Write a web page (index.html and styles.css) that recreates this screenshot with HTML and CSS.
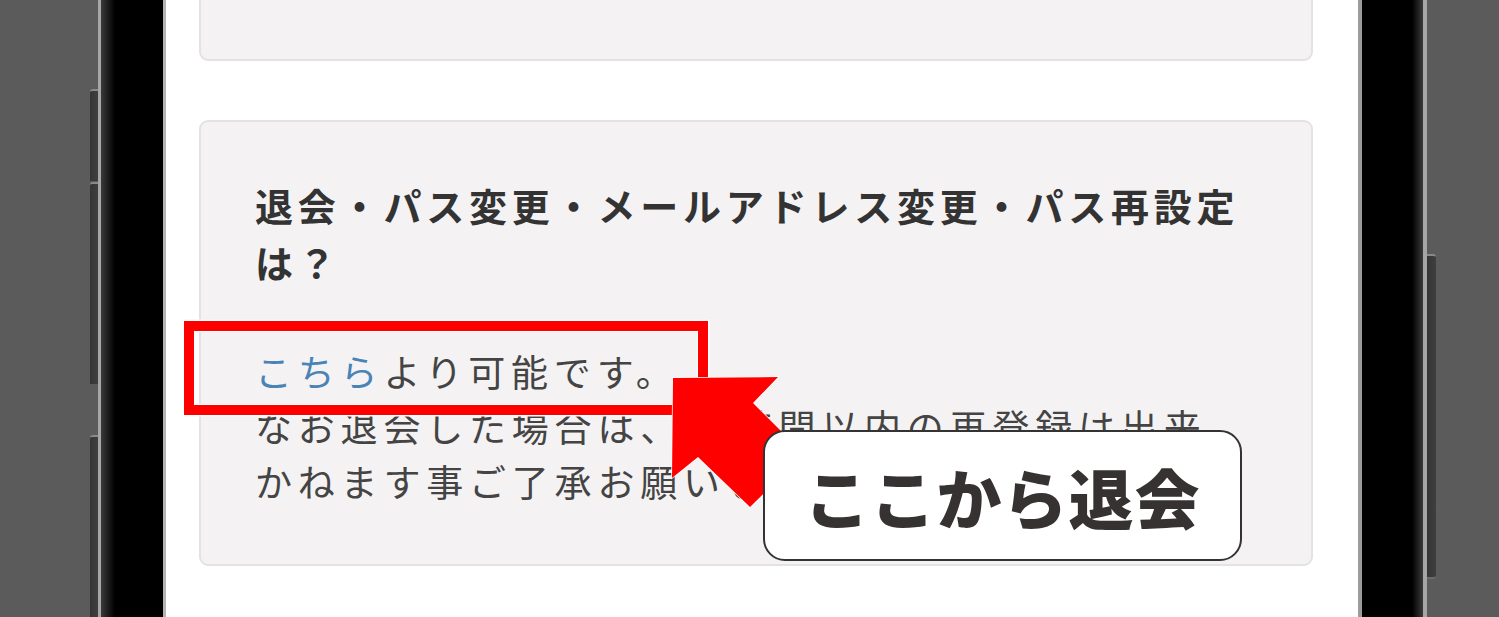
FILE: index.html
```html
<!DOCTYPE html>
<html lang="ja">
<head>
  <meta charset="UTF-8">
  <title>退会・パス変更</title>
  <link rel="stylesheet" href="styles.css">
</head>
<body>

  <div class="stage">
    <div class="buttons-left">
      <span class="side-btn btn-1"></span>
      <span class="side-btn btn-2"></span>
      <span class="side-btn btn-3"></span>
    </div>

    <div class="phone">
      <div class="screen">
        <div class="card card-prev"></div>

        <div class="card card-faq">
          <h3 class="faq-title">退会・パス変更・メールアドレス変更・パス再設定は？</h3>
          <p class="faq-body"><a href="#" class="faq-link">こちら</a>より可能です。<br>なお退会した場合は、24時間以内の再登録は出来かねます事ご了承お願いします。</p>
        </div>
      </div>
    </div>

    <div class="buttons-right">
      <span class="side-btn btn-4"></span>
    </div>

    <!-- annotation layer -->
    <div class="mark-box"></div>
    <svg class="mark-arrow" width="1499" height="617" viewBox="0 0 1499 617">
      <polygon points="673,378 778,377 753,403 804,454 750,507 698,457 672,478" />
    </svg>
    <div class="callout">ここから退会</div>
  </div>

</body>
</html>
```

FILE: styles.css
```css
body {
  margin: 0;
  background-color: #5b5b5b;
  font-family: "Noto Sans CJK JP", "Noto Sans", sans-serif;
  overflow: hidden;
}

.stage {
  position: relative;
  display: flex;
  height: 617px;
  padding-left: 90px;
}

/* side buttons of the phone */
.buttons-left,
.buttons-right {
  display: flex;
  flex-direction: column;
  width: 8px;
}

.buttons-right {
  width: 9px;
}

.side-btn {
  display: block;
  background: linear-gradient(to right, #353535, #3f3f3f);
  border-top: 2px solid #8a8a8a;
  border-radius: 3px 0 0 0;
}

.buttons-right .side-btn {
  border-radius: 0 3px 3px 0;
  border-bottom: 2px solid #6a6a6a;
}

.btn-1 { margin-top: 89px; height: 90px; }
.btn-2 { margin-top: 1px; height: 200px; }
.btn-3 { margin-top: 51px; flex: 1; }
.btn-4 { margin-top: 254px; height: 321px; }

/* phone body */
.phone {
  display: flex;
  width: 1329px;
  padding: 0 61px 0 62px;
  border-left: 3px solid #a6a6a6;
  border-right: 4px solid #a6a6a6;
  background: linear-gradient(to right, #3a3a3a 0, #000 14px, #000 calc(100% - 11px), #3a3a3a 100%);
  box-sizing: border-box;
}

.screen {
  flex: 1;
  background-color: #fff;
  border-left: 3px solid #b4b4b4;
  border-right: 4px solid #9c9c9c;
  padding: 0 45px 0 33px;
}

.card {
  background-color: #f4f2f3;
  border: 2px solid #e4e2e3;
  border-radius: 9px;
}

.card-prev {
  height: 59px;
  border-top: none;
  border-radius: 0 0 9px 9px;
}

.card-faq {
  margin-top: 59px;
  padding: 54px 66px 54px 54px;
  height: 446px;
  box-sizing: border-box;
}

.faq-title {
  margin: 0;
  font-size: 38px;
  font-weight: bold;
  line-height: 57px;
  letter-spacing: 4.8px;
  color: #333;
}

.faq-body {
  margin: 54px 0 0;
  font-size: 37px;
  font-weight: normal;
  line-height: 55px;
  letter-spacing: 5.8px;
  color: #444;
}

.faq-link {
  color: #4a83b6;
  text-decoration: none;
}

/* annotations */
.mark-box {
  position: absolute;
  left: 184px;
  top: 321px;
  width: 504px;
  height: 74px;
  border: 10px solid #ff0000;
  box-shadow: 0 0 0 1.5px #fff, inset 0 0 0 1px #fff;
}

.mark-arrow {
  position: absolute;
  left: 0;
  top: 0;
  pointer-events: none;
}

.mark-arrow polygon {
  fill: #ff0000;
  stroke: #fff;
  stroke-width: 1.5;
  paint-order: stroke;
}

.callout {
  position: absolute;
  left: 763px;
  top: 430px;
  width: 479px;
  height: 131px;
  box-sizing: border-box;
  display: flex;
  align-items: center;
  justify-content: center;
  background-color: #fff;
  border: 2px solid #333;
  border-radius: 22px;
  font-size: 65px;
  font-weight: 900;
  color: #363232;
  letter-spacing: 1px;
}
```
